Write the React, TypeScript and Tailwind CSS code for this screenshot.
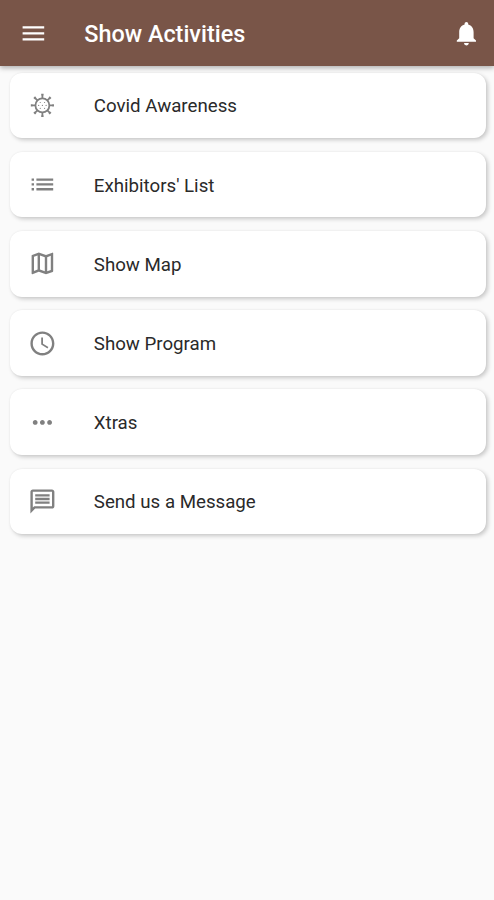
import { ReactNode } from 'react';
import {
  MdList,
  MdMenu,
  MdMoreHoriz,
  MdNotifications,
  MdOutlineMap,
  MdOutlineMessage,
  MdSchedule,
} from 'react-icons/md';

interface Activity {
  title: string;
  icon: ReactNode;
}

const SPIKES = [0, 45, 90, 135, 180, 225, 270, 315];

function VirusIcon() {
  return (
    <svg viewBox="0 0 24 24" fill="none" stroke="currentColor" strokeWidth="1.5" className="size-[28.8px]">
      <circle cx="12" cy="12" r="5.8" />
      {SPIKES.map((angle) => (
        <path key={angle} d="M12 6.2V3.1M11 3.1h2" transform={`rotate(${angle} 12 12)`} />
      ))}
      <g fill="currentColor" stroke="none">
        <circle cx="10.2" cy="9.6" r="0.5" />
        <circle cx="13.8" cy="9.6" r="0.5" />
        <circle cx="8.9" cy="12" r="0.5" />
        <circle cx="12" cy="12" r="0.5" />
        <circle cx="15.1" cy="12" r="0.5" />
        <circle cx="10.2" cy="14.4" r="0.5" />
        <circle cx="13.8" cy="14.4" r="0.5" />
      </g>
    </svg>
  );
}

const activities: Activity[] = [
  { title: 'Covid Awareness', icon: <VirusIcon /> },
  { title: "Exhibitors' List", icon: <MdList className="size-[28.8px]" /> },
  { title: 'Show Map', icon: <MdOutlineMap className="size-[28.8px]" /> },
  { title: 'Show Program', icon: <MdSchedule className="size-[28.8px]" /> },
  { title: 'Xtras', icon: <MdMoreHoriz className="size-[28.8px]" /> },
  { title: 'Send us a Message', icon: <MdOutlineMessage className="size-[28.8px]" /> },
];

function ActivityCard({ title, icon }: Activity) {
  return (
    <button className="flex h-[65.6px] w-full items-center rounded-[12px] bg-white pl-[18.5px] text-left shadow-[2px_2px_4px_rgba(0,0,0,0.2),0_0_2px_rgba(0,0,0,0.06)]">
      <span className="text-[#808080]">{icon}</span>
      <span className="ml-[37px] pt-0.5 text-[18.7px] leading-6 text-[#2a2a2a]">{title}</span>
    </button>
  );
}

export default function App() {
  return (
    <div className="flex min-h-screen flex-col bg-[#fafafa] font-['Roboto',sans-serif]">
      <header className="relative flex h-[66px] items-center bg-[#795548] pr-[13px] pl-[18.5px] text-white shadow-[0_2px_5px_rgba(0,0,0,0.3)]">
        <button aria-label="Menu">
          <MdMenu className="size-[28.8px]" />
        </button>
        <h1 className="ml-[37px] flex-1 pt-0.5 text-[23.4px] leading-7 font-medium">Show Activities</h1>
        <button aria-label="Notifications">
          <MdNotifications className="size-[28.8px]" />
        </button>
      </header>

      <main className="flex flex-col gap-[13.6px] pt-[6.6px] pr-[8.5px] pl-[9.5px]">
        {activities.map((activity) => (
          <ActivityCard key={activity.title} {...activity} />
        ))}
      </main>
    </div>
  );
}
